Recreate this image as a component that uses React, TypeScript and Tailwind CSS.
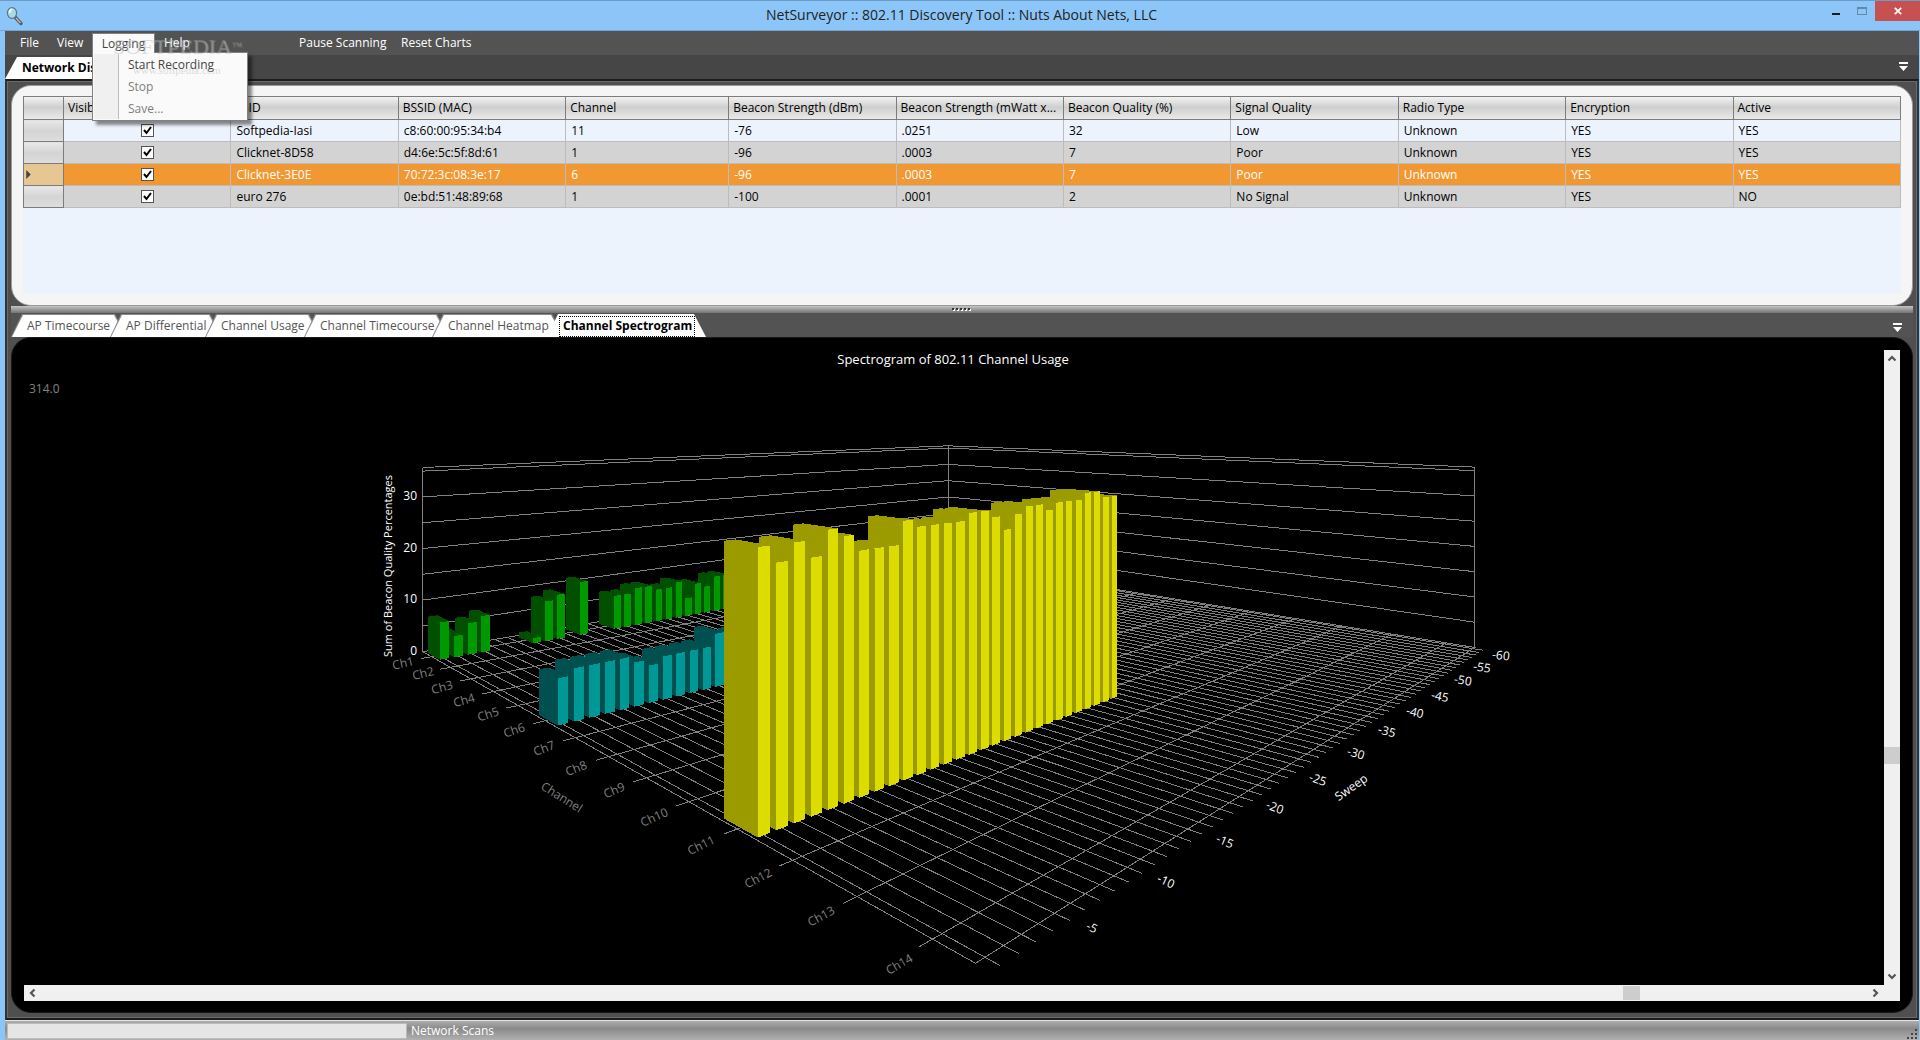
import type { ReactNode } from 'react';

type Point = [number, number];

interface Series {
  channel: number;
  front: string;
  side: string;
  values: number[];
}

const columns = ['Visible', 'SSID', 'BSSID (MAC)', 'Channel', 'Beacon Strength (dBm)', 'Beacon Strength (mWatt x...', 'Beacon Quality (%)', 'Signal Quality', 'Radio Type', 'Encryption', 'Active'];

const accessPoints = [
  ['Softpedia-Iasi', 'c8:60:00:95:34:b4', '11', '-76', '.0251', '32', 'Low', 'Unknown', 'YES', 'YES'],
  ['Clicknet-8D58', 'd4:6e:5c:5f:8d:61', '1', '-96', '.0003', '7', 'Poor', 'Unknown', 'YES', 'YES'],
  ['Clicknet-3E0E', '70:72:3c:08:3e:17', '6', '-96', '.0003', '7', 'Poor', 'Unknown', 'YES', 'YES'],
  ['euro 276', '0e:bd:51:48:89:68', '1', '-100', '.0001', '2', 'No Signal', 'Unknown', 'YES', 'NO'],
];

const rowColors = ['bg-[#edf3fc]', 'bg-[#d3d3d3]', 'bg-[#f19832] text-white', 'bg-[#d3d3d3]'];

const chartTabs = [
  { label: 'AP Timecourse', width: 'w-[116px]' },
  { label: 'AP Differential', width: 'w-[112px]' },
  { label: 'Channel Usage', width: 'w-[116px]' },
  { label: 'Channel Timecourse', width: 'w-[145px]' },
  { label: 'Channel Heatmap', width: 'w-[132px]' },
];

const series: Series[] = [
  {
    channel: 1,
    front: '#009900',
    side: '#005000',
    values: [7, 4, 6, 7, 0, 0, 0, 1, 8, 9, 0, 11, 0, 0, 7, 7, 8, 8, 7, 7, 8, 4, 7, 6, 8, 8],
  },
  {
    channel: 6,
    front: '#009797',
    side: '#005050',
    values: [7, 8, 8, 8, 8, 7, 6, 7, 7, 7, 7, 9, 7, 8],
  },
  {
    channel: 11,
    front: '#dcdc00',
    side: '#9b9b00',
    values: [32, 30, 32, 30, 33, 32, 30, 30, 30, 33, 32, 32, 32, 32, 33, 33, 32, 30, 32, 33, 33, 32, 33, 33, 33, 34, 34, 33, 33],
  },
];

const channelLabels: Point[] = [
  [403, 663], [423, 673], [442, 687], [464, 700], [488, 714], [514, 730], [544, 748],
  [576, 768], [614, 790], [654, 817], [701, 845], [758, 878], [821, 916], [899, 964],
];

const sweepLabels: Point[] = [
  [1092, 927], [1166, 881], [1225, 841], [1275, 807], [1318, 779], [1356, 753],
  [1387, 731], [1415, 712], [1440, 696], [1463, 680], [1482, 667], [1501, 655],
];

// Floor corners: sweep 0 / channel 0, sweep 0 / channel max, all max, sweep max / channel 0
const LEFT: Point = [422.7, 651.7];
const FRONT: Point = [975.5, 963.3];
const RIGHT: Point = [1474.7, 647.5];
const BACK: Point = [948.3, 562.3];

const CHANNELS = 14;
const SWEEPS = 60;
const UNIT = 5.16;
const TOP = 35.7;
const TICK = 0.012;
const HALF = 0.33;

// Perspective mapping of the unit square to the four floor corners
const dx1 = FRONT[0] - RIGHT[0];
const dy1 = FRONT[1] - RIGHT[1];
const dx2 = BACK[0] - RIGHT[0];
const dy2 = BACK[1] - RIGHT[1];
const sx = LEFT[0] - FRONT[0] + RIGHT[0] - BACK[0];
const sy = LEFT[1] - FRONT[1] + RIGHT[1] - BACK[1];
const det = dx1 * dy2 - dx2 * dy1;
const g = (sx * dy2 - dx2 * sy) / det;
const h = (dx1 * sy - sx * dy1) / det;

function project(u: number, v: number, z = 0): Point {
  const w = 1 + g * u + h * v;
  const x = (LEFT[0] + (FRONT[0] * (1 + g) - LEFT[0]) * u + (BACK[0] * (1 + h) - LEFT[0]) * v) / w;
  const y = (LEFT[1] + (FRONT[1] * (1 + g) - LEFT[1]) * u + (BACK[1] * (1 + h) - LEFT[1]) * v) / w;
  return [x, y - (z * UNIT) / w];
}

function path(points: Point[]) {
  return points.map(([x, y], i) => `${i ? 'L' : 'M'}${x.toFixed(1)} ${y.toFixed(1)}`).join('');
}

function buildGrid() {
  const lines: Point[][] = [];
  for (let n = 1; n <= CHANNELS; n += 1) {
    const u = (n - 0.5) / CHANNELS;
    lines.push([project(u, -TICK), project(u, 1)]);
  }
  for (let k = 1; k <= SWEEPS; k += 1) {
    const v = (k - 0.5) / SWEEPS;
    lines.push([project(0, v), project(1 + TICK, v)]);
  }
  lines.push([project(0, 0), project(1, 0), project(1, 1), project(0, 1), project(0, 0)]);
  [5, 10, 15, 20, 25, 30, 35, TOP].forEach((z) => {
    lines.push([project(0, 0, z), project(0, 1, z), project(1, 1, z)]);
  });
  lines.push([project(0, 0), project(0, 0, TOP)]);
  lines.push([project(0, 1), project(0, 1, TOP)]);
  lines.push([project(1, 1), project(1, 1, TOP)]);
  return lines.map(path).join('');
}

function Bars({ channel, front, side, values }: Series) {
  const u0 = (channel - 0.5 - HALF) / CHANNELS;
  const u1 = (channel - 0.5 + HALF) / CHANNELS;
  return (
    <g>
      {values.map((value, i) => ({ value, sweep: i + 0.5 })).reverse().filter((bar) => bar.value > 0).map(({ value, sweep }) => {
        const v0 = (sweep - HALF) / SWEEPS;
        const v1 = (sweep + HALF) / SWEEPS;
        return (
          <g key={sweep}>
            <path fill={side} d={path([project(u0, v0, value), project(u0, v1, value), project(u1, v1, value), project(u1, v0, value)])} />
            <path fill={side} d={path([project(u0, v0), project(u0, v0, value), project(u1, v0, value), project(u1, v0)])} />
            <path fill={front} d={path([project(u1, v0), project(u1, v0, value), project(u1, v1, value), project(u1, v1)])} />
          </g>
        );
      })}
    </g>
  );
}

function RotatedText({ at, angle, fill, className, children }: { at: Point; angle: number; fill: string; className?: string; children: ReactNode }) {
  return (
    <text x={at[0]} y={at[1]} fill={fill} className={className} textAnchor="middle" dominantBaseline="central" transform={`rotate(${angle} ${at[0]} ${at[1]})`}>
      {children}
    </text>
  );
}

function Spectrogram() {
  return (
    <svg viewBox="24 350 1860 635" className="block h-full w-full text-xs" role="img" aria-label="Spectrogram of 802.11 Channel Usage">
      <text x="953" y="364" fill="#fff" textAnchor="middle" className="text-[13px]">Spectrogram of 802.11 Channel Usage</text>
      <text x="29" y="393" fill="#808080">314.0</text>
      <g shapeRendering="crispEdges">
        <path d={buildGrid()} fill="none" stroke="#808080" />
        {series.map((item) => <Bars key={item.channel} {...item} />)}
      </g>
      {[0, 10, 20, 30].map((z) => (
        <text key={z} x="417" y={project(0, 0, z)[1] + 3} fill="#fff" textAnchor="end">{z}</text>
      ))}
      <RotatedText at={[387, 566]} angle={-90} fill="#fff" className="text-[11px]">Sum of Beacon Quality Percentages</RotatedText>
      {channelLabels.map((at, i) => (
        <RotatedText key={i} at={at} angle={-12 - i * 1.4} fill="#808080">{`Ch${i + 1}`}</RotatedText>
      ))}
      {sweepLabels.map((at, i) => (
        <RotatedText key={i} at={at} angle={26 - i * 1.8} fill="#fff">{-5 * (i + 1)}</RotatedText>
      ))}
      <RotatedText at={[562, 797]} angle={32} fill="#808080">Channel</RotatedText>
      <RotatedText at={[1351, 787]} angle={-35} fill="#fff">Sweep</RotatedText>
    </svg>
  );
}

function Chevron({ className = '' }: { className?: string }) {
  return (
    <svg viewBox="0 0 16 16" className={`h-4 w-4 shrink-0 ${className}`} fill="none" stroke="#555" strokeWidth="2.200">
      <path d="M4.500 10.500L8 7L11.500 10.500" />
    </svg>
  );
}

function OverflowButton({ label }: { label: string }) {
  return (
    <button aria-label={label} className="p-1">
      <svg viewBox="0 0 10 10" className="h-[10px] w-[10px]" fill="#fff">
        <path d="M0 0H9V2H0ZM0 4H9L4.500 9Z" />
      </svg>
    </button>
  );
}

function ChartTab({ label, width }: { label: string; width: string }) {
  return (
    <button className={`relative -mr-[17px] h-[23px] shrink-0 bg-[#8a8a8a] text-left text-[#555] [clip-path:polygon(0_100%,11px_0,calc(100%-12px)_0,100%_100%)] ${width}`}>
      <span className="flex h-full items-center bg-white pt-px pl-4 whitespace-nowrap [clip-path:polygon(1px_100%,12px_1px,calc(100%-13px)_1px,calc(100%-1px)_100%)]">{label}</span>
    </button>
  );
}

function TitleBar() {
  return (
    <header className="flex h-[31px] shrink-0 items-start border-t border-b border-t-[#6b9bc8] border-b-[#74a5d2]">
      <svg viewBox="0 0 18 20" className="mt-[5px] ml-[6px] h-5 w-[18px]" aria-hidden="true">
        <path d="M9 11L15 17.500" stroke="#555c63" strokeWidth="3.400" strokeLinecap="round" />
        <path d="M10 12L14.500 17" stroke="#b9bfc4" strokeWidth="1.200" />
        <ellipse cx="6" cy="7" rx="4.600" ry="5.400" fill="#a9dbe6" stroke="#5d7684" strokeWidth="1.200" />
        <path d="M3.500 7C3.500 5 4.500 3.500 6 3.200" stroke="#fff" strokeWidth="1.400" fill="none" />
      </svg>
      <h1 className="flex-1 pt-1 pl-[76px] text-center text-sm leading-5 text-[#222]">NetSurveyor :: 802.11 Discovery Tool :: Nuts About Nets, LLC</h1>
      <button aria-label="Minimize" className="flex h-[15px] w-[26px] items-end justify-center pb-px"><span className="h-[2px] w-2 bg-[#1a1a1a]" /></button>
      <button aria-label="Maximize" className="flex h-[15px] w-[26px] items-end justify-center pb-px"><span className="h-2 w-[10px] border border-t-2 border-[#6688a8]" /></button>
      <button aria-label="Close" className="flex h-5 w-[45px] items-center justify-center bg-[#c75050]">
        <svg viewBox="0 0 10 10" className="h-2 w-2" stroke="#fff" strokeWidth="2.200"><path d="M1 1L9 9M9 1L1 9" /></svg>
      </button>
    </header>
  );
}

function MenuBar() {
  return (
    <nav className="flex h-6 shrink-0 items-center bg-[#535353] text-white">
      <button className="w-[37px] pl-[15px] text-left">File</button>
      <button className="ml-[15px] w-[35px] text-left">View</button>
      <div className="relative z-20 h-5">
        <button aria-expanded="true" className="relative z-10 h-5 w-[63px] border border-b-0 border-[#808080] bg-[#fafafa] text-center text-[#444]">Logging</button>
        <div role="menu" className="absolute top-[19px] left-0 flex w-[156px] border border-[#808080] bg-[#fafafa] text-[#444] shadow-[4px_4px_3px_rgba(0,0,0,0.45)]">
          <div className="m-px w-[25px] border-r border-[#bdbdbd] bg-[#f0f0f0]" />
          <div className="flex flex-col pl-2">
            <button role="menuitem" className="h-[23px] text-left">Start Recording</button>
            <button role="menuitem" disabled className="h-[22px] text-left text-[#808080]">Stop</button>
            <button role="menuitem" disabled className="h-[22px] text-left text-[#808080]">Save...</button>
          </div>
        </div>
        <div className="pointer-events-none absolute top-[2px] left-[21px] z-20 text-[#a8a8a8]/40 [text-shadow:1px_1px_1px_rgba(255,255,255,0.3)]">
          <p className="font-['Liberation_Serif',serif] text-[22px] leading-6">SOFTPEDIA<sup className="text-[10px]">™</sup></p>
          <p className="pt-[3px] pl-5 font-['Liberation_Serif',serif] text-[11px] leading-4">www.softpedia.com</p>
        </div>
      </div>
      <button className="ml-[9px] w-[37px] text-left">Help</button>
      <button className="ml-[98px] w-[85px] text-left whitespace-nowrap">Pause Scanning</button>
      <button className="ml-[17px] text-left whitespace-nowrap">Reset Charts</button>
    </nav>
  );
}

function AccessPointTable() {
  return (
    <table className="w-full table-fixed border-collapse">
      <colgroup>
        <col className="w-10" />
        <col />
        <col />
        <col />
        <col className="w-[163px]" />
        <col span={7} />
      </colgroup>
      <thead>
        <tr className="h-[23px] bg-linear-to-b from-[#f2f2f2] via-[#cfcfcf] via-45% to-[#ececec]">
          <th aria-label="Selected" className="border border-[#7c7c7c]" />
          {columns.map((name) => (
            <th key={name} scope="col" className="border border-[#7c7c7c] px-1 text-left font-normal whitespace-nowrap">{name}</th>
          ))}
        </tr>
      </thead>
      <tbody>
        {accessPoints.map((row, i) => (
          <tr key={row[0]} className={`h-[22px] ${rowColors[i]}`}>
            <th scope="row" aria-label={row[0]} className={`border border-[#7c7c7c] px-[2px] ${i === 2 ? 'bg-[#e6c793]' : 'bg-linear-to-b from-[#e8e8e8] via-[#d4d4d4] to-[#dedede]'}`}>
              {i === 2 && <svg viewBox="0 0 5 10" className="h-[9px] w-[5px]" fill="#444"><path d="M0 0L5 5L0 10Z" /></svg>}
            </th>
            <td className="border border-[#bcbcbc]">
              <label className="relative mx-auto block h-[13px] w-[13px]">
                <input type="checkbox" defaultChecked aria-label={`Show ${row[0]}`} className="block h-[13px] w-[13px] appearance-none border border-[#555] bg-white" />
                <svg viewBox="0 0 13 13" className="pointer-events-none absolute inset-0 h-[13px] w-[13px]" fill="none" stroke="#000" strokeWidth="2"><path d="M3 6L5.500 9L10 3" /></svg>
              </label>
            </td>
            {row.map((value, j) => (
              <td key={columns[j + 1]} className="truncate border border-[#bcbcbc] px-[5px]">{value}</td>
            ))}
          </tr>
        ))}
      </tbody>
    </table>
  );
}

export default function App() {
  return (
    <div className="flex h-screen flex-col overflow-hidden bg-[#8cc6f9] font-['Open_Sans','Noto_Sans',sans-serif] text-xs leading-4 text-black">
      <TitleBar />
      <main className="mr-px ml-[5px] flex min-h-0 flex-1 flex-col bg-[#4a4a4a]">
        <MenuBar />
        <div className="flex h-6 shrink-0 items-center justify-between bg-[#464646] pr-[6px]">
          <button className="h-[22px] w-[160px] self-end bg-white pl-[17px] text-left font-bold [clip-path:polygon(0_100%,12px_0,148px_0,100%_100%)]">Network Discovery</button>
          <OverflowButton label="Document list" />
        </div>

        <div className="flex min-h-0 flex-1 flex-col border-2 border-[#1c1c1c] border-x-[#333]">
          <div className="flex min-h-0 flex-1 flex-col border border-[#6b6b6b] bg-[#4f4f4f] px-[3px] pt-[3px] pb-1">
            <section className="h-[221px] shrink-0 rounded-[20px] border border-[#9a9a9a] bg-[#f5f5f5] px-[11px] pt-[10px] pb-[11px]">
              <div className="h-full bg-[#edf3fc]">
                <AccessPointTable />
              </div>
            </section>

            <div className="flex h-[7px] shrink-0 items-center justify-center bg-linear-to-b from-[#c4c4c4] to-[#747474]">
              <svg viewBox="0 0 20 4" className="h-1 w-5" shapeRendering="crispEdges">
                <path d="M1 1h2v2h-2zM5 1h2v2h-2zM9 1h2v2h-2zM13 1h2v2h-2zM17 1h2v2h-2z" fill="#fff" />
                <path d="M0 0h2v2h-2zM4 0h2v2h-2zM8 0h2v2h-2zM12 0h2v2h-2zM16 0h2v2h-2z" fill="#333" />
              </svg>
            </div>

            <div className="flex h-6 shrink-0 items-end justify-between bg-[#535353] pr-[6px]">
              <div className="flex min-w-0">
                {chartTabs.map((tab) => <ChartTab key={tab.label} {...tab} />)}
                <button className="relative h-[23px] w-[159px] shrink-0 bg-white pt-px pl-3 text-left font-bold [clip-path:polygon(0_100%,11px_0,calc(100%-12px)_0,100%_100%)]">
                  <span className="flex h-[21px] w-[136px] items-center border border-dotted border-black pl-[3px] whitespace-nowrap">Channel Spectrogram</span>
                </button>
              </div>
              <OverflowButton label="Chart list" />
            </div>

            <section className="flex min-h-0 flex-1 flex-col rounded-[20px] border border-[#1a1a1a] bg-black px-3 pt-3 pb-[11px]">
              <div className="flex min-h-0 flex-1">
                <div className="min-w-0 flex-1"><Spectrogram /></div>
                <div className="flex w-4 shrink-0 flex-col items-center bg-[#f0f0f0]">
                  <Chevron />
                  <div className="flex-[380]" />
                  <div className="h-[17px] w-full bg-[#cdcdcd]" />
                  <div className="flex-[205]" />
                  <Chevron className="rotate-180" />
                </div>
              </div>
              <div className="flex h-4 shrink-0 items-center bg-[#f0f0f0] pr-4">
                <Chevron className="-rotate-90" />
                <div className="flex-[1583]" />
                <div className="h-[14px] w-[17px] bg-[#cdcdcd]" />
                <div className="flex-[228]" />
                <Chevron className="rotate-90" />
              </div>
            </section>
          </div>
        </div>

        <footer className="flex h-5 shrink-0 items-center border-t border-[#e4e4e4] bg-linear-to-b from-[#adadad] via-[#8a8a8a] via-40% to-[#b0b0b0] pl-[2px] text-white">
          <div role="progressbar" aria-label="Network scans" className="h-4 w-[400px] border border-[#bbb] bg-[#e5e5e5]" />
          <span className="flex-1 pl-1">Network Scans</span>
          <svg viewBox="0 0 12 12" className="mr-px h-3 w-3 self-end" fill="#444">
            <path d="M9 1h2v2h-2zM5 5h2v2h-2zM9 5h2v2h-2zM1 9h2v2h-2zM5 9h2v2h-2zM9 9h2v2h-2z" />
          </svg>
        </footer>
      </main>
    </div>
  );
}
